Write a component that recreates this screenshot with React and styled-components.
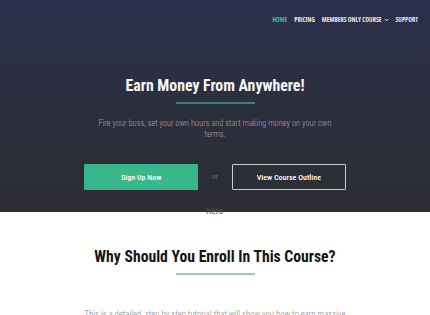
import styled, { createGlobalStyle } from "styled-components";

const Global = createGlobalStyle`
  body {
    margin: 0;
    background: #fff;
    font-family: "Roboto Condensed", "Roboto", sans-serif;
  }
`;

const Hero = styled.header`
  height: 212px;
  background: linear-gradient(180deg, #2b2f4c 0%, #2c2f40 45%, #2d2e33 100%);
  display: flex;
  flex-direction: column;
  align-items: center;
`;

const Nav = styled.nav`
  align-self: stretch;
  display: flex;
  justify-content: flex-end;
  align-items: center;
  gap: 7px;
  padding: 17px 12px 0 0;
`;

const NavLink = styled.a`
  font-family: "Open Sans", sans-serif;
  font-stretch: semi-condensed;
  font-weight: 700;
  font-size: 6.4px;
  line-height: 6px;
  text-transform: uppercase;
  color: ${(p) => (p.$active ? "#4cb89a" : "#e8e9ef")};
  display: flex;
  align-items: center;
  gap: 2px;
`;

const Title = styled.h1`
  margin: 53px 0 0;
  font-size: 15.8px;
  line-height: 20px;
  font-weight: 700;
  color: #f4f5f8;
`;

const Bar = styled.div`
  width: 79px;
  height: 2px;
  margin-top: 6px;
  background: ${(p) => p.$color};
`;

const Lead = styled.p`
  width: 250px;
  margin: 14px 0 0;
  text-align: center;
  font-size: 8.4px;
  line-height: 11px;
  font-weight: 300;
  color: #a3a6ae;
`;

const Actions = styled.div`
  display: flex;
  align-items: center;
  gap: 14px;
  margin-top: 24px;
`;

const Button = styled.a`
  box-sizing: border-box;
  width: 114px;
  height: 26px;
  display: flex;
  align-items: center;
  justify-content: center;
  font-size: 8px;
  font-weight: 500;
  color: #fff;
  background: ${(p) => (p.$outline ? "transparent" : "#38b68c")};
  border: 1px solid ${(p) => (p.$outline ? "#c9cad0" : "#38b68c")};
  border-radius: 1px;
`;

const Or = styled.span`
  font-size: 7px;
  color: #6e7079;
`;

const HeroLabel = styled.div`
  margin-top: -6px;
  text-align: center;
  font-family: "Roboto", sans-serif;
  font-size: 8.5px;
  line-height: 10px;
  color: #555;
`;

const Section = styled.section`
  display: flex;
  flex-direction: column;
  align-items: center;
`;

const SectionTitle = styled.h2`
  margin: 31px 0 0;
  font-size: 15.7px;
  line-height: 20px;
  font-weight: 700;
  color: #141414;
`;

const Body = styled.p`
  width: 272px;
  margin: 33px 0 0;
  text-align: center;
  font-size: 8.7px;
  line-height: 12px;
  font-weight: 300;
  color: #808080;
`;

const Chevron = () => (
  <svg width="5" height="4" viewBox="0 0 10 8" fill="none">
    <path d="M1.5 2l3.5 3.5L8.5 2" stroke="#e8e9ef" strokeWidth="2" />
  </svg>
);

export default function App() {
  return (
    <>
      <Global />
      <Hero>
        <Nav>
          <NavLink $active>Home</NavLink>
          <NavLink>Pricing</NavLink>
          <NavLink>
            Members Only Course <Chevron />
          </NavLink>
          <NavLink>Support</NavLink>
        </Nav>
        <Title>Earn Money From Anywhere!</Title>
        <Bar $color="#3a7f73" />
        <Lead>
          Fire your boss, set your own hours and start making money on your own
          terms.
        </Lead>
        <Actions>
          <Button>Sign Up Now</Button>
          <Or>or</Or>
          <Button $outline>View Course Outline</Button>
        </Actions>
      </Hero>
      <HeroLabel>hero</HeroLabel>
      <Section>
        <SectionTitle>Why Should You Enroll In This Course?</SectionTitle>
        <Bar $color="#8fd0c0" />
        <Body>
          This is a detailed, step by step tutorial that will show you how to
          earn massive amounts of money working from anywhere in the world.
        </Body>
      </Section>
    </>
  );
}
